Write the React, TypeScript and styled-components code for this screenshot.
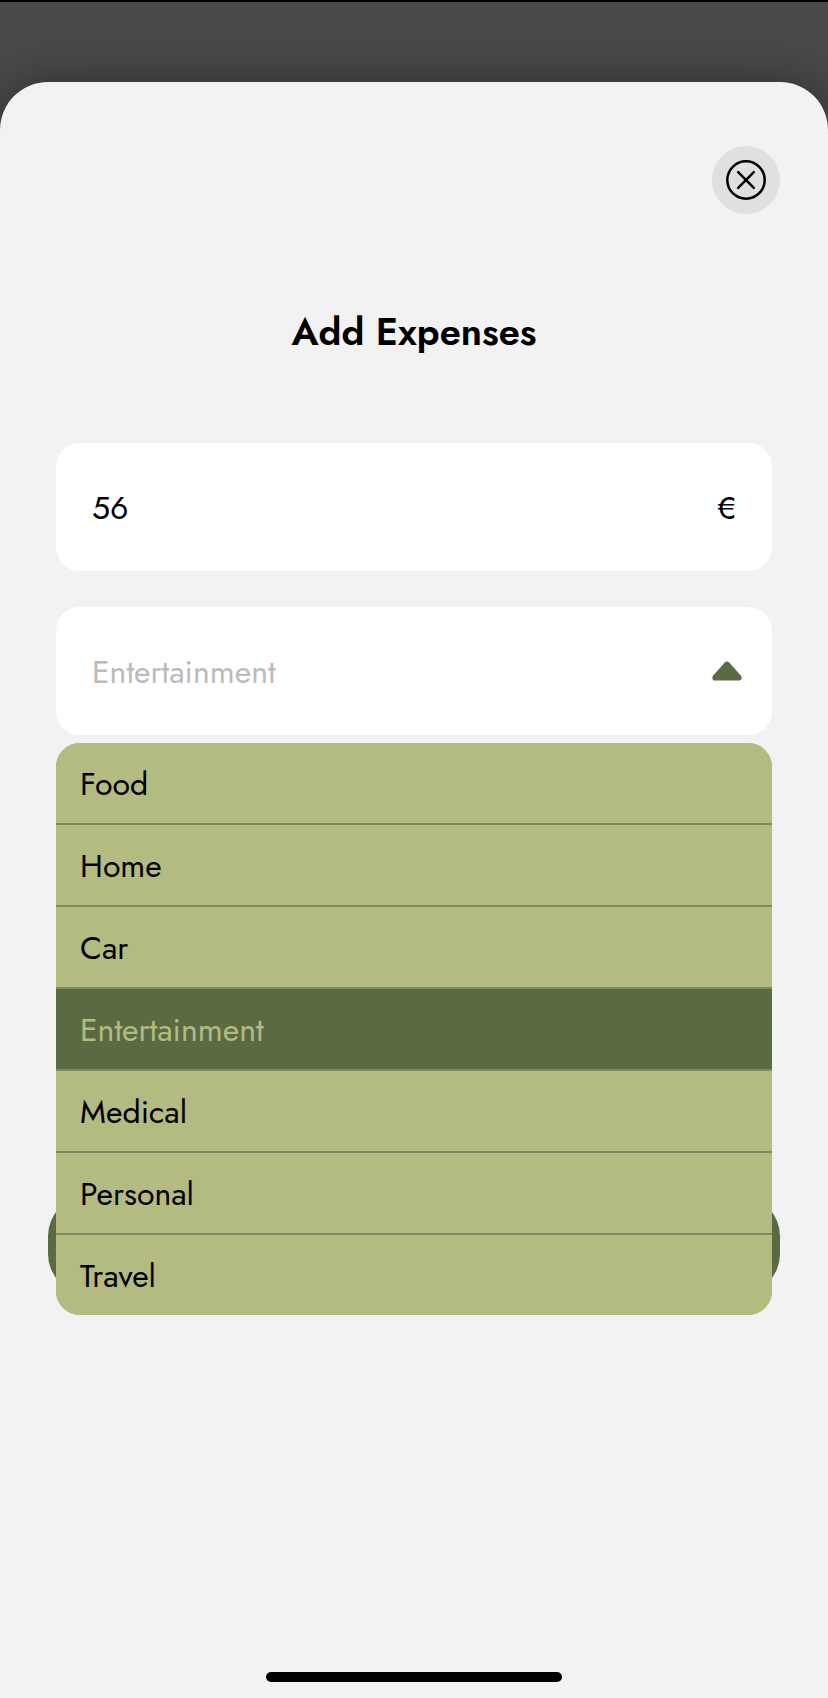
import React from "react";
import styled, { createGlobalStyle } from "styled-components";

const GlobalStyle = createGlobalStyle`
  * { box-sizing: border-box; }
  body { margin: 0; background: #494949; }
`;

const Screen = styled.div`
  height: 1698px;
  width: 828px;
  display: flex;
  flex-direction: column;
  padding-top: 80px;
  overflow: hidden;
  background: #494949;
  border-top: 2px solid #000;
  font-family: Jost, Lato, sans-serif;
  color: #000;
`;

const Sheet = styled.main`
  flex: 1;
  display: flex;
  flex-direction: column;
  padding: 64px 48px 16px;
  background: #f2f2f2;
  border-radius: 48px 48px 0 0;
  box-shadow: 0 0 48px rgba(0, 0, 0, 0.36);
`;

const CloseButton = styled.button`
  align-self: flex-end;
  width: 68px;
  height: 68px;
  padding: 0;
  border: 0;
  border-radius: 50%;
  display: grid;
  place-items: center;
  background: #e0e0e0;
`;

const Title = styled.h1`
  margin: 94px 0 0;
  height: 48px;
  line-height: 48px;
  font-size: 38px;
  font-weight: 600;
  text-align: center;
`;

const Form = styled.div`
  display: flex;
  flex-direction: column;
  gap: 36px;
  margin: 87px 8px 0;
`;

const Field = styled.div`
  height: 128px;
  padding: 0 36px;
  display: flex;
  align-items: center;
  justify-content: space-between;
  background: #fff;
  border-radius: 24px;
  font-size: 32px;
`;

const SelectWrap = styled.div`
  position: relative;
`;

const Label = styled.span<{ $muted?: boolean }>`
  padding-top: 2px;
  color: ${({ $muted }) => ($muted ? "#bbb" : "inherit")};
  white-space: nowrap;
`;

const Arrow = styled.svg`
  margin-right: -6px;
  display: block;
`;

const Menu = styled.ul`
  position: absolute;
  top: 136px;
  left: 0;
  right: 0;
  z-index: 1;
  margin: 0;
  padding: 0;
  list-style: none;
  overflow: hidden;
  border-radius: 24px;
  background: #b3bb80;
`;

const Option = styled.li<{ $selected: boolean }>`
  display: flex;
  align-items: center;
  height: 82px;
  padding-left: 24px;
  font-size: 32px;
  border-bottom: 2px solid #7c8c60;
  background: ${({ $selected }) => ($selected ? "#5a6b44" : "#b3bb80")};
  color: ${({ $selected }) => ($selected ? "#b3bb80" : "#000")};

  &:last-child {
    height: 80px;
    border-bottom: 0;
  }
`;

const SubmitButton = styled.button`
  width: 100%;
  height: 98px;
  margin-top: 461px;
  flex-shrink: 0;
  border: 0;
  border-radius: 40px;
  background: #5a6b44;
`;

const HomeIndicator = styled.div`
  width: 296px;
  height: 10px;
  margin: auto auto 0;
  border-radius: 5px;
  background: #000;
`;

const options = ["Food", "Home", "Car", "Entertainment", "Medical", "Personal", "Travel"];

const selected = "Entertainment";

export default function App() {
  return (
    <>
      <GlobalStyle />
      <Screen>
        <Sheet>
          <CloseButton aria-label="Close">
            <svg width="40" height="40" viewBox="0 0 40 40" fill="none" stroke="#000" strokeWidth="2.5" strokeLinecap="round">
              <circle cx="20" cy="20" r="18.7" />
              <path d="M12.2 12.2 27.8 27.8M27.8 12.2 12.2 27.8" />
            </svg>
          </CloseButton>
          <Title>Add Expenses</Title>
          <Form>
            <Field>
              <Label>56</Label>
              <Label>€</Label>
            </Field>
            <SelectWrap>
              <Field>
                <Label $muted>{selected}</Label>
                <Arrow width="30" height="20" viewBox="0 0 30 20">
                  <path d="M12.8 1.4Q15 -.5 17.2 1.4L28.8 14.6Q30.6 17.2 28.8 19Q28 19.6 26.8 19.6H3.2Q2 19.6 1.2 19Q-.6 17.2 1.2 14.6Z" fill="#5a6b44" />
                </Arrow>
              </Field>
              <Menu>
                {options.map((name) => (
                  <Option key={name} $selected={name === selected}>
                    <Label>{name}</Label>
                  </Option>
                ))}
              </Menu>
            </SelectWrap>
          </Form>
          <SubmitButton aria-label="Add" />
          <HomeIndicator />
        </Sheet>
      </Screen>
    </>
  );
}
